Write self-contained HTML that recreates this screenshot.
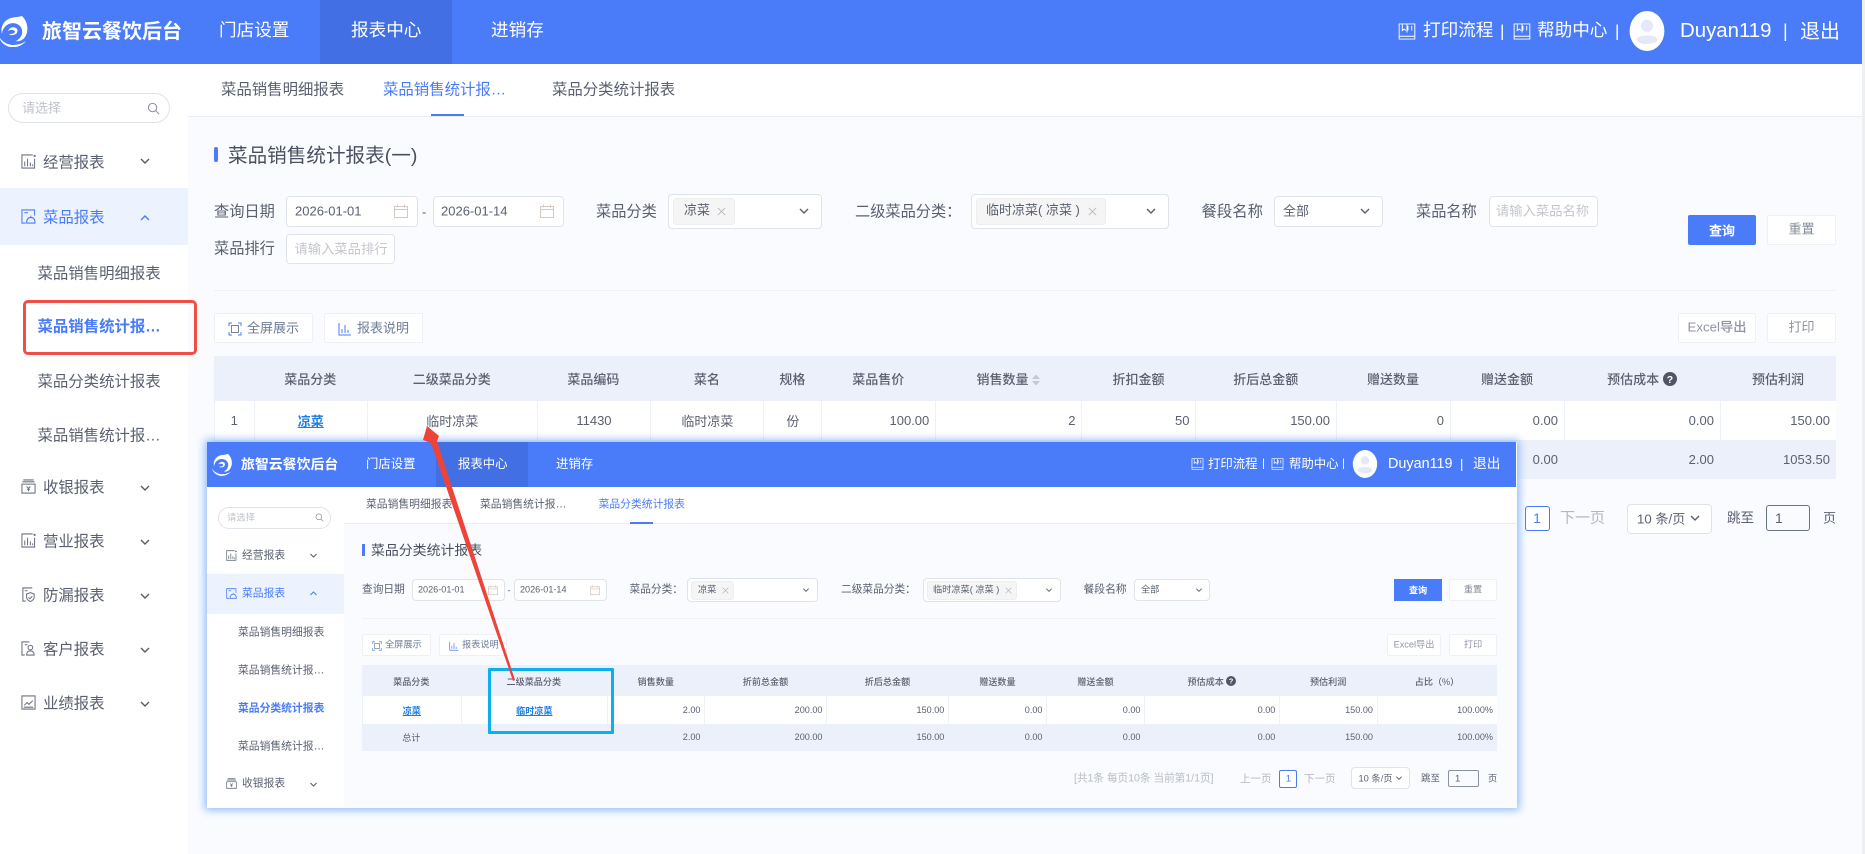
<!DOCTYPE html>
<html lang="zh"><head><meta charset="utf-8"><title>菜品销售统计报表</title>
<style>
html,body{margin:0;padding:0;background:#f9fbff}
body{width:1865px;height:854px;position:relative;overflow:hidden;font-family:"Liberation Sans","Noto Sans CJK SC",sans-serif;color:#5a6070}
.b{position:absolute;box-sizing:border-box}
.t,.c,.r{position:absolute;line-height:1;white-space:nowrap}
.t{transform:translateY(-50%)}
.c{transform:translate(-50%,-50%)}
.r{transform:translate(-100%,-50%)}
svg.i{position:absolute;overflow:visible;fill:none;stroke:none}
.w{color:#fff}.bl{color:#4a7cf9}
.inp{background:#fff;border:1px solid #dfe3ea;border-radius:4px}
.btn{background:#fff;border:1px solid #eef0f5;border-radius:2px}
.tag{background:#f5f5f5;border:1px solid #eeeeee;border-radius:3px}
table{position:absolute;border-collapse:separate;border-spacing:0;table-layout:fixed;color:#5a6070}
td,th{padding:0;overflow:hidden;white-space:nowrap;box-sizing:border-box}
th{background:#ecf0fa;font-weight:500;text-align:center}
tr.d td{background:#fff;border-left:1px solid #eef1f8;text-align:right}
tr.s td{background:#ecf0fa;text-align:right}
td.m{text-align:center!important}
#T1{left:214px;top:356px;width:1622px;font-size:13px}
#T1 td{padding-right:6px}#T1 td.m{padding-right:0}
#T1 th{height:45px}#T1 tr.d td{height:39px}#T1 tr.s td{height:39px}
#T2{left:362px;top:665px;width:1135px;font-size:9.1px}
#T2 td{padding-right:4px}#T2 td.m{padding-right:0}
#T2 th{height:31px}#T2 tr.d td{height:27.5px}#T2 tr.s td{height:27.5px}
a{color:#1e7ee6;font-weight:700;text-decoration:underline}
</style></head><body>
<svg width="0" height="0" style="position:absolute"><defs>
<symbol id="chev" viewBox="0 0 12 12"><path d="M2 4l4 4 4-4" fill="none" stroke="currentColor" stroke-width="1.4"/></symbol>
<symbol id="up" viewBox="0 0 12 12"><path d="M2 8l4-4 4 4" fill="none" stroke="currentColor" stroke-width="1.4"/></symbol>
<symbol id="cal" viewBox="0 0 14 14"><path d="M.5 2.5h13v11H.5zM.5 5.5h13M3.5 .5v3M10.5 .5v3" fill="none" stroke="#d6c9c0" stroke-width="1"/></symbol>
<symbol id="srch" viewBox="0 0 14 14"><circle cx="6" cy="6" r="4.5" fill="none" stroke="#8a8f9c" stroke-width="1.1"/><path d="M9.5 9.5l3.5 3.5" stroke="#8a8f9c" stroke-width="1.1"/></symbol>
<symbol id="x" viewBox="0 0 10 10"><path d="M1 1l8 8M9 1l-8 8" stroke="#b5b8bf" stroke-width="1"/></symbol>
<symbol id="book" viewBox="0 0 18 18"><path d="M.7 1h16.6v13H.7zM.7 14v3h16.6v-3M9 1v9M4 1v7l2-1.5L8 8M10 3v5M14 3v5" fill="none" stroke="#fff" stroke-width="1"/></symbol>
<symbol id="ava" viewBox="0 0 40 46"><ellipse cx="20" cy="23" rx="20" ry="23" fill="#fff"/><circle cx="20" cy="17" r="7" fill="#e4e8f8"/><ellipse cx="20" cy="33" rx="12" ry="5" fill="#e4e8f8"/></symbol>
<symbol id="logo" viewBox="0 0 30 32"><path d="M23 1c6 6 7 15 3 21-2 3-6 5-9 4 4-2 7-6 6-11-1-6-9-9-15-5C5 12 3 16 3 19 1 12 5 5 12 3c4-1 8-1 11-2zM0 21c2 5 7 8 13 9 5 0 10-1 14-4-4 5-10 7-16 6C6 31 1 27 0 21z" fill="#fff"/><path d="M9 16c1-3 5-5 8-3 2 1 2 4 0 6-2 1-5 2-7 0 2 0 5 0 6-2 0-2-4-3-7-1z" fill="#fff"/></symbol>
<symbol id="chart" viewBox="0 0 16 16"><path d="M12.5 1H1v14h13.5V5M4 13V8M7 13V5M10 13V9M12.5 13v-2" fill="none" stroke="currentColor" stroke-width="1.1"/><circle cx="14.5" cy="2" r="1.2" fill="currentColor"/></symbol>
<symbol id="dish" viewBox="0 0 16 16"><path d="M14.5 7V1H1v14h4M15 15H6c0-4 1.5-6 4.5-6s4.5 2 4.5 6zM3.500 4h4M10.500 7V9" fill="none" stroke="currentColor" stroke-width="1.100"/></symbol>
<symbol id="cash" viewBox="0 0 16 16"><path d="M2.500 1h11M1.500 3h13M1 5.500h14V15H1zM6 8l2 2 2-2M8 10v3M6.500 11h3" fill="none" stroke="currentColor" stroke-width="1.100"/></symbol>
<symbol id="shield" viewBox="0 0 16 16"><path d="M12 1H2v14h3M2 1v14M10 6l4 1.500V11c0 2-2 3.500-4 4.500-2-1-4-2.500-4-4.500V7.500zM8 11l1.500 1.500L12 10M4 4h3" fill="none" stroke="currentColor" stroke-width="1.100"/></symbol>
<symbol id="user" viewBox="0 0 16 16"><path d="M9 1H1v14h3M1 1v14M4 4h3M6 15c0-3 1.500-4.500 4-4.500s4 1.500 4 4.500zM6.500 15h8" fill="none" stroke="currentColor" stroke-width="1.100"/><circle cx="10" cy="7" r="2.500" fill="none" stroke="currentColor" stroke-width="1.100"/></symbol>
<symbol id="trend" viewBox="0 0 16 16"><path d="M1 1h14v14H1zM3.500 11l3-3 2 2 4-4M3 13h10" fill="none" stroke="currentColor" stroke-width="1.100"/></symbol>
<symbol id="full" viewBox="0 0 14 14"><path d="M1 4V1h3M10 1h3v3M13 10v3h-3M4 13H1v-3" fill="none" stroke="#4a7cf9" stroke-width="1"/><rect x="3.500" y="3.500" width="7" height="7" fill="none" stroke="#7d8590" stroke-width="1"/></symbol>
<symbol id="bars" viewBox="0 0 14 14"><path d="M1 1v12h12M4 11V7M7 11V3M10 11V8" fill="none" stroke="#4a7cf9" stroke-width="1"/></symbol>
<symbol id="q" viewBox="0 0 14 14"><circle cx="7" cy="7" r="7" fill="#4f5668"/><text x="7" y="10.800" font-size="10.500" font-weight="700" text-anchor="middle" fill="#fff" font-family="Liberation Sans">?</text></symbol>
<symbol id="sort" viewBox="0 0 8 12"><path d="M4 .5L8 5H0zM4 11.500L0 7h8z" fill="#c3c8d2"/></symbol>
</defs></svg>

<!-- MAIN: header -->
<div class="b" style="left:0;top:0;width:1862px;height:64px;background:#4a7cf9"></div>
<div class="b" style="left:320px;top:0;width:132px;height:64px;background:#4270e4"></div>
<svg class="i" style="left:-1px;top:15px;width:30px;height:32px"><use href="#logo"/></svg>
<span class="t w" style="left:42px;top:32px;font-size:20px;font-weight:700">旅智云餐饮后台</span>
<span class="t w" style="left:219px;top:31px;font-size:17.6px">门店设置</span>
<span class="t w" style="left:351px;top:31px;font-size:17.6px">报表中心</span>
<span class="t w" style="left:491px;top:31px;font-size:17.6px">进销存</span>
<svg class="i" style="left:1398px;top:23px;width:18px;height:17px"><use href="#book"/></svg>
<span class="t w" style="left:1423px;top:31px;font-size:17.6px">打印流程</span>
<span class="t w" style="left:1500px;top:31px;font-size:17px">|</span>
<svg class="i" style="left:1513px;top:23px;width:18px;height:17px"><use href="#book"/></svg>
<span class="t w" style="left:1537px;top:31px;font-size:17.6px">帮助中心</span>
<span class="t w" style="left:1615px;top:31px;font-size:17px">|</span>
<svg class="i" style="left:1627px;top:11px;width:40px;height:40px"><use href="#ava"/></svg>
<span class="t w" style="left:1680px;top:31px;font-size:20.400px">Duyan119</span>
<span class="t w" style="left:1783px;top:31px;font-size:18px">|</span>
<span class="t w" style="left:1800px;top:32px;font-size:20px">退出</span>
<div class="b" style="left:1862px;top:0;width:3px;height:854px;background:#eeeff1"></div>

<!-- MAIN: sidebar -->
<div class="b" style="left:0;top:64px;width:188px;height:790px;background:#fff"></div>
<div class="b" style="left:8px;top:93px;width:162px;height:30px;border:1px solid #dfe3ea;border-radius:15px;background:#fff"></div>
<span class="t" style="left:22px;top:108px;font-size:13px;color:#bfc3ca">请选择</span>
<svg class="i" style="left:147px;top:102px;width:13px;height:13px"><use href="#srch"/></svg>
<div class="b" style="left:0;top:188px;width:188px;height:57px;background:#edf3fe"></div>
<svg class="i" style="left:21px;top:154px;width:15px;height:15px;color:#6b7180"><use href="#chart"/></svg>
<span class="t" style="left:43px;top:162.500px;font-size:15.400px">经营报表</span>
<svg class="i" style="left:139px;top:155px;width:12px;height:12px;color:#555c6b"><use href="#chev"/></svg>
<svg class="i bl" style="left:21px;top:209px;width:15px;height:15px"><use href="#dish"/></svg>
<span class="t bl" style="left:43px;top:217.500px;font-size:15.400px">菜品报表</span>
<svg class="i" style="left:139px;top:212px;width:12px;height:12px;color:#4a7cf9"><use href="#up"/></svg>
<span class="t" style="left:37.500px;top:273.500px;font-size:15.400px">菜品销售明细报表</span>
<span class="t bl" style="left:37.500px;top:327px;font-size:15.400px;font-weight:700">菜品销售统计报…</span>
<span class="t" style="left:37.500px;top:381.500px;font-size:15.400px">菜品分类统计报表</span>
<span class="t" style="left:37.500px;top:436px;font-size:15.400px">菜品销售统计报…</span>
<div class="b" style="left:23px;top:300px;width:174px;height:55px;border:3px solid #ef4f45;border-radius:5px"></div>
<svg class="i" style="left:21px;top:479px;width:15px;height:15px;color:#6b7180"><use href="#cash"/></svg>
<span class="t" style="left:43px;top:488px;font-size:15.400px">收银报表</span>
<svg class="i" style="left:139px;top:482px;width:12px;height:12px;color:#555c6b"><use href="#chev"/></svg>
<svg class="i" style="left:21px;top:533px;width:15px;height:15px;color:#6b7180"><use href="#chart"/></svg>
<span class="t" style="left:43px;top:542px;font-size:15.400px">营业报表</span>
<svg class="i" style="left:139px;top:536px;width:12px;height:12px;color:#555c6b"><use href="#chev"/></svg>
<svg class="i" style="left:21px;top:587px;width:15px;height:15px;color:#6b7180"><use href="#shield"/></svg>
<span class="t" style="left:43px;top:596px;font-size:15.400px">防漏报表</span>
<svg class="i" style="left:139px;top:590px;width:12px;height:12px;color:#555c6b"><use href="#chev"/></svg>
<svg class="i" style="left:21px;top:641px;width:15px;height:15px;color:#6b7180"><use href="#user"/></svg>
<span class="t" style="left:43px;top:650px;font-size:15.400px">客户报表</span>
<svg class="i" style="left:139px;top:644px;width:12px;height:12px;color:#555c6b"><use href="#chev"/></svg>
<svg class="i" style="left:21px;top:695px;width:15px;height:15px;color:#6b7180"><use href="#trend"/></svg>
<span class="t" style="left:43px;top:704px;font-size:15.400px">业绩报表</span>
<svg class="i" style="left:139px;top:698px;width:12px;height:12px;color:#555c6b"><use href="#chev"/></svg>

<!-- MAIN: tabs -->
<div class="b" style="left:188px;top:64px;width:1674px;height:53px;background:#fff;border-bottom:1px solid #e9edf4"></div>
<span class="t" style="left:221px;top:90px;font-size:15.400px">菜品销售明细报表</span>
<span class="t bl" style="left:383px;top:90px;font-size:15.400px">菜品销售统计报…</span>
<span class="t" style="left:552px;top:90px;font-size:15.400px">菜品分类统计报表</span>
<div class="b" style="left:431px;top:114px;width:33px;height:2px;background:#4a7cf9"></div>

<!-- MAIN: title -->
<div class="b" style="left:214px;top:147px;width:4px;height:15px;background:#4a7cf9;border-radius:2px"></div>
<span class="t" style="left:228px;top:156.500px;font-size:19.600px;color:#4a5060">菜品销售统计报表(一)</span>

<!-- MAIN: filters -->
<span class="t" style="left:214px;top:212px;font-size:15.200px">查询日期</span>
<div class="b inp" style="left:286px;top:196px;width:132px;height:31px"></div>
<span class="t" style="left:295px;top:211px;font-size:13px">2026-01-01</span>
<svg class="i" style="left:394px;top:204px;width:14px;height:14px"><use href="#cal"/></svg>
<span class="t" style="left:422px;top:212px;font-size:13px">-</span>
<div class="b inp" style="left:432.500px;top:196px;width:131px;height:31px"></div>
<span class="t" style="left:441px;top:211px;font-size:13px">2026-01-14</span>
<svg class="i" style="left:540px;top:204px;width:14px;height:14px"><use href="#cal"/></svg>
<span class="t" style="left:596px;top:212px;font-size:15.200px">菜品分类</span>
<div class="b inp" style="left:668px;top:194px;width:153.500px;height:35px"></div>
<div class="b tag" style="left:673px;top:198px;width:62px;height:27px"></div>
<span class="t" style="left:684px;top:210px;font-size:13px">凉菜</span>
<svg class="i" style="left:717px;top:207px;width:9px;height:9px"><use href="#x"/></svg>
<svg class="i" style="left:798px;top:205px;width:12px;height:12px;color:#5a6070"><use href="#chev"/></svg>
<span class="t" style="left:855px;top:212px;font-size:15.200px">二级菜品分类：</span>
<div class="b inp" style="left:971px;top:194px;width:197.500px;height:35px"></div>
<div class="b tag" style="left:976px;top:198px;width:129.500px;height:27px"></div>
<span class="t" style="left:986px;top:210px;font-size:13px">临时凉菜( 凉菜 )</span>
<svg class="i" style="left:1088px;top:207px;width:9px;height:9px"><use href="#x"/></svg>
<svg class="i" style="left:1145px;top:205px;width:12px;height:12px;color:#5a6070"><use href="#chev"/></svg>
<span class="t" style="left:1201.500px;top:212px;font-size:15.400px">餐段名称</span>
<div class="b inp" style="left:1273.500px;top:196px;width:109px;height:31px"></div>
<span class="t" style="left:1283px;top:211px;font-size:13px">全部</span>
<svg class="i" style="left:1359px;top:205px;width:12px;height:12px;color:#5a6070"><use href="#chev"/></svg>
<span class="t" style="left:1416px;top:212px;font-size:15.200px">菜品名称</span>
<div class="b inp" style="left:1488.500px;top:196px;width:109px;height:31px"></div>
<span class="t" style="left:1496px;top:211px;font-size:13.300px;color:#c3c6cc">请输入菜品名称</span>
<span class="t" style="left:214px;top:249px;font-size:15.200px">菜品排行</span>
<div class="b inp" style="left:286px;top:234px;width:109px;height:30px"></div>
<span class="t" style="left:294.500px;top:249px;font-size:13.300px;color:#c3c6cc">请输入菜品排行</span>
<div class="b" style="left:1688px;top:215px;width:68px;height:30px;background:#4a7cf9;border-radius:2px"></div>
<span class="c w" style="left:1722px;top:231px;font-size:13px;font-weight:700">查询</span>
<div class="b btn" style="left:1767px;top:215px;width:69px;height:30px"></div>
<span class="c" style="left:1801.500px;top:229px;font-size:13px;color:#868c99">重置</span>
<div class="b" style="left:214px;top:290px;width:1622px;height:1px;background:#eff2f7"></div>
<div class="b btn" style="left:214px;top:313px;width:99px;height:30px"></div>
<svg class="i" style="left:228px;top:322px;width:14px;height:14px"><use href="#full"/></svg>
<span class="t" style="left:247px;top:328px;font-size:13px;color:#6e7c96">全屏展示</span>
<div class="b btn" style="left:324px;top:313px;width:99px;height:30px"></div>
<svg class="i" style="left:338px;top:322px;width:14px;height:14px"><use href="#bars"/></svg>
<span class="t" style="left:357px;top:328px;font-size:13px;color:#6e7c96">报表说明</span>
<div class="b btn" style="left:1678px;top:313px;width:78px;height:30px"></div>
<span class="c" style="left:1717px;top:327px;font-size:13.300px;color:#8f95a3;font-weight:500">Excel导出</span>
<div class="b btn" style="left:1767px;top:313px;width:69px;height:30px"></div>
<span class="c" style="left:1801.500px;top:327px;font-size:13px;color:#8f95a3">打印</span>

<!-- MAIN: table -->
<table id="T1"><colgroup><col style="width:39.500px"><col style="width:113.500px"><col style="width:169.600px"><col style="width:113.700px"><col style="width:113.200px"><col style="width:57.800px"><col style="width:114px"><col style="width:146.200px"><col style="width:114px"><col style="width:140.500px"><col style="width:114px"><col style="width:114px"><col style="width:156px"><col style="width:116px"></colgroup>
<tr><th></th><th>菜品分类</th><th>二级菜品分类</th><th>菜品编码</th><th>菜名</th><th>规格</th><th>菜品售价</th><th>销售数量 <svg width="8" height="12" style="vertical-align:-2px"><use href="#sort"/></svg></th><th>折扣金额</th><th>折后总金额</th><th>赠送数量</th><th>赠送金额</th><th>预估成本 <svg width="14" height="14" style="vertical-align:-2px"><use href="#q"/></svg></th><th>预估利润</th></tr>
<tr class="d"><td class="m">1</td><td class="m"><a>凉菜</a></td><td class="m">临时凉菜</td><td class="m">11430</td><td class="m">临时凉菜</td><td class="m">份</td><td>100.00</td><td>2</td><td>50</td><td>150.00</td><td>0</td><td>0.00</td><td>0.00</td><td>150.00</td></tr>
<tr class="s"><td></td><td class="m">总计</td><td></td><td></td><td></td><td></td><td></td><td></td><td></td><td></td><td></td><td>0.00</td><td>2.00</td><td>1053.50</td></tr>
</table>

<!-- MAIN: pagination -->
<div class="b" style="left:1524.500px;top:506px;width:25px;height:25px;border:1px solid #4a7cf9;border-radius:3px;background:#fff"></div>
<span class="c bl" style="left:1537px;top:518px;font-size:14px">1</span>
<span class="t" style="left:1560px;top:518px;font-size:15px;color:#b3b7c0">下一页</span>
<div class="b inp" style="left:1627px;top:504px;width:85px;height:30px"></div>
<span class="t" style="left:1637px;top:519px;font-size:13.200px">10 条/页</span>
<svg class="i" style="left:1689px;top:512px;width:12px;height:12px;color:#5a6070"><use href="#chev"/></svg>
<span class="t" style="left:1727px;top:518px;font-size:13.500px">跳至</span>
<div class="b" style="left:1766px;top:505px;width:44px;height:26px;border:1px solid #6a7285;border-radius:3px"></div>
<span class="t" style="left:1775px;top:518px;font-size:14px">1</span>
<span class="t" style="left:1823px;top:518px;font-size:13px">页</span>

<!-- OVERLAY -->
<div class="b" style="left:207px;top:442px;width:1310px;height:366px;background:#f9fbff;box-shadow:0 0 8px 2px #8db8fb"></div>
<div class="b" style="left:207px;top:442px;width:1309px;height:45px;background:#4a7cf9"></div>
<div class="b" style="left:436px;top:442px;width:92px;height:45px;background:#4270e4"></div>
<svg class="i" style="left:211.500px;top:453px;width:21px;height:23px"><use href="#logo"/></svg>
<span class="t w" style="left:241px;top:464.500px;font-size:13.900px;font-weight:700">旅智云餐饮后台</span>
<span class="t w" style="left:366px;top:463.500px;font-size:12.400px">门店设置</span>
<span class="t w" style="left:458px;top:463.500px;font-size:12.400px">报表中心</span>
<span class="t w" style="left:556px;top:463.500px;font-size:12.400px">进销存</span>
<svg class="i" style="left:1191px;top:458px;width:13px;height:12px"><use href="#book"/></svg>
<span class="t w" style="left:1208px;top:463.500px;font-size:12.400px">打印流程</span>
<span class="t w" style="left:1262px;top:464px;font-size:11px">|</span>
<svg class="i" style="left:1271px;top:458px;width:13px;height:12px"><use href="#book"/></svg>
<span class="t w" style="left:1289px;top:463.500px;font-size:12.400px">帮助中心</span>
<span class="t w" style="left:1342px;top:464px;font-size:11px">|</span>
<svg class="i" style="left:1351px;top:450px;width:28px;height:28px"><use href="#ava"/></svg>
<span class="t w" style="left:1388px;top:463.500px;font-size:14.400px">Duyan119</span>
<span class="t w" style="left:1460px;top:464px;font-size:13px">|</span>
<span class="t w" style="left:1473px;top:464px;font-size:13.700px">退出</span>

<div class="b" style="left:207px;top:487px;width:136.600px;height:321px;background:#fff"></div>
<div class="b" style="left:217.500px;top:507px;width:113px;height:21.500px;border:1px solid #dfe3ea;border-radius:11px"></div>
<span class="t" style="left:227px;top:517.500px;font-size:9.300px;color:#bfc3ca">请选择</span>
<svg class="i" style="left:315px;top:513px;width:9px;height:9px"><use href="#srch"/></svg>
<div class="b" style="left:207px;top:574px;width:136.600px;height:40px;background:#edf3fe"></div>
<svg class="i" style="left:226px;top:550px;width:11px;height:11px;color:#6b7180"><use href="#chart"/></svg>
<span class="t" style="left:242px;top:556px;font-size:10.800px">经营报表</span>
<svg class="i" style="left:309px;top:550.500px;width:9px;height:9px;color:#555c6b"><use href="#chev"/></svg>
<svg class="i bl" style="left:226px;top:588px;width:11px;height:11px"><use href="#dish"/></svg>
<span class="t bl" style="left:242px;top:594px;font-size:10.800px">菜品报表</span>
<svg class="i" style="left:309px;top:589px;width:9px;height:9px;color:#4a7cf9"><use href="#up"/></svg>
<span class="t" style="left:238px;top:633px;font-size:10.800px">菜品销售明细报表</span>
<span class="t" style="left:238px;top:671px;font-size:10.800px">菜品销售统计报…</span>
<span class="t bl" style="left:238px;top:709px;font-size:10.800px;font-weight:700">菜品分类统计报表</span>
<span class="t" style="left:238px;top:747px;font-size:10.800px">菜品销售统计报…</span>
<svg class="i" style="left:226px;top:778px;width:11px;height:11px;color:#6b7180"><use href="#cash"/></svg>
<span class="t" style="left:242px;top:784px;font-size:10.800px">收银报表</span>
<svg class="i" style="left:309px;top:779.500px;width:9px;height:9px;color:#555c6b"><use href="#chev"/></svg>

<div class="b" style="left:343.600px;top:487px;width:1172.400px;height:37px;background:#fff;border-bottom:1px solid #e9edf4"></div>
<span class="t" style="left:366px;top:505px;font-size:10.800px">菜品销售明细报表</span>
<span class="t" style="left:480px;top:505px;font-size:10.800px">菜品销售统计报…</span>
<span class="t bl" style="left:598.600px;top:505px;font-size:10.800px">菜品分类统计报表</span>
<div class="b" style="left:630px;top:522px;width:23px;height:1.500px;background:#4a7cf9"></div>

<div class="b" style="left:362px;top:544px;width:2.500px;height:12px;background:#4a7cf9"></div>
<span class="t" style="left:371px;top:550.500px;font-size:13.900px;color:#4a5060">菜品分类统计报表</span>

<span class="t" style="left:362px;top:590px;font-size:10.700px">查询日期</span>
<div class="b inp" style="left:412px;top:579px;width:92.500px;height:22px"></div>
<span class="t" style="left:418px;top:590px;font-size:9.100px">2026-01-01</span>
<svg class="i" style="left:488px;top:585px;width:10px;height:10px"><use href="#cal"/></svg>
<span class="t" style="left:507.500px;top:590.500px;font-size:9px">-</span>
<div class="b inp" style="left:514px;top:579px;width:92.500px;height:22px"></div>
<span class="t" style="left:520px;top:590px;font-size:9.100px">2026-01-14</span>
<svg class="i" style="left:590px;top:585px;width:10px;height:10px"><use href="#cal"/></svg>
<span class="t" style="left:629.500px;top:590px;font-size:10.700px">菜品分类：</span>
<div class="b inp" style="left:687.400px;top:578px;width:130.300px;height:24px"></div>
<div class="b tag" style="left:691.300px;top:581px;width:42.300px;height:19px"></div>
<span class="t" style="left:698px;top:589.500px;font-size:9.200px">凉菜</span>
<svg class="i" style="left:721.500px;top:587px;width:7px;height:7px"><use href="#x"/></svg>
<svg class="i" style="left:801.500px;top:586px;width:8px;height:8px;color:#5a6070"><use href="#chev"/></svg>
<span class="t" style="left:841px;top:590px;font-size:10.700px">二级菜品分类：</span>
<div class="b inp" style="left:922.500px;top:578px;width:138px;height:24px"></div>
<div class="b tag" style="left:926.500px;top:581px;width:90px;height:19px"></div>
<span class="t" style="left:933px;top:589.500px;font-size:9.200px">临时凉菜( 凉菜 )</span>
<svg class="i" style="left:1004.500px;top:587px;width:7px;height:7px"><use href="#x"/></svg>
<svg class="i" style="left:1044.500px;top:586px;width:8px;height:8px;color:#5a6070"><use href="#chev"/></svg>
<span class="t" style="left:1083.500px;top:590px;font-size:10.800px">餐段名称</span>
<div class="b inp" style="left:1134px;top:579px;width:76px;height:22px"></div>
<span class="t" style="left:1141px;top:590px;font-size:9.200px">全部</span>
<svg class="i" style="left:1194.500px;top:586px;width:8px;height:8px;color:#5a6070"><use href="#chev"/></svg>
<div class="b" style="left:1394px;top:579px;width:47.500px;height:22px;background:#4a7cf9"></div>
<span class="c w" style="left:1418px;top:591px;font-size:9.200px;font-weight:700">查询</span>
<div class="b btn" style="left:1449px;top:579px;width:48px;height:22px"></div>
<span class="c" style="left:1473px;top:589.500px;font-size:9.200px;color:#868c99">重置</span>
<div class="b" style="left:362px;top:618px;width:1135px;height:1px;background:#eff2f7"></div>
<div class="b btn" style="left:362px;top:634px;width:69px;height:22px"></div>
<svg class="i" style="left:372px;top:641px;width:10px;height:10px"><use href="#full"/></svg>
<span class="t" style="left:385px;top:645px;font-size:9.200px;color:#6e7c96">全屏展示</span>
<div class="b btn" style="left:439px;top:634px;width:68px;height:22px"></div>
<svg class="i" style="left:449px;top:641px;width:10px;height:10px"><use href="#bars"/></svg>
<span class="t" style="left:462px;top:645px;font-size:9.200px;color:#6e7c96">报表说明</span>
<div class="b btn" style="left:1387px;top:634px;width:54px;height:22px"></div>
<span class="c" style="left:1414px;top:645px;font-size:9.200px;color:#8f95a3">Excel导出</span>
<div class="b btn" style="left:1449px;top:634px;width:48px;height:22px"></div>
<span class="c" style="left:1473px;top:645px;font-size:9.200px;color:#8f95a3">打印</span>

<table id="T2"><colgroup><col style="width:98.600px"><col style="width:146.400px"><col style="width:97.500px"><col style="width:122px"><col style="width:121.900px"><col style="width:98.100px"><col style="width:98px"><col style="width:134.900px"><col style="width:97.600px"><col style="width:120px"></colgroup>
<tr><th>菜品分类</th><th>二级菜品分类</th><th>销售数量</th><th>折前总金额</th><th>折后总金额</th><th>赠送数量</th><th>赠送金额</th><th>预估成本 <svg width="10" height="10" style="vertical-align:-1.500px"><use href="#q"/></svg></th><th>预估利润</th><th>占比（%）</th></tr>
<tr class="d"><td class="m"><a>凉菜</a></td><td class="m"><a>临时凉菜</a></td><td>2.00</td><td>200.00</td><td>150.00</td><td>0.00</td><td>0.00</td><td>0.00</td><td>150.00</td><td>100.00%</td></tr>
<tr class="s"><td class="m">总计</td><td></td><td>2.00</td><td>200.00</td><td>150.00</td><td>0.00</td><td>0.00</td><td>0.00</td><td>150.00</td><td>100.00%</td></tr>
</table>

<span class="t" style="left:1074px;top:779px;font-size:10.600px;color:#b8bcc5">[共1条 每页10条 当前第1/1页]</span>
<span class="t" style="left:1240px;top:779px;font-size:10.500px;color:#b3b7c0">上一页</span>
<div class="b" style="left:1279.400px;top:770px;width:18px;height:18px;border:1px solid #4a7cf9;border-radius:2px;background:#fff"></div>
<span class="c bl" style="left:1288.400px;top:779px;font-size:9.500px">1</span>
<span class="t" style="left:1304px;top:779px;font-size:10.500px;color:#b3b7c0">下一页</span>
<div class="b inp" style="left:1351px;top:767px;width:59px;height:22px"></div>
<span class="t" style="left:1358.500px;top:778.500px;font-size:9.300px">10 条/页</span>
<svg class="i" style="left:1394.500px;top:774px;width:8px;height:8px;color:#5a6070"><use href="#chev"/></svg>
<span class="t" style="left:1421px;top:778.500px;font-size:9.500px">跳至</span>
<div class="b" style="left:1448px;top:770px;width:31px;height:17px;border:1px solid #8a91a0;border-radius:2px"></div>
<span class="t" style="left:1455px;top:778.500px;font-size:9.500px">1</span>
<span class="t" style="left:1488px;top:778.500px;font-size:9.200px">页</span>

<!-- Annotations -->
<div class="b" style="left:488px;top:668px;width:126px;height:66px;border:3px solid #0cb0ef;border-radius:1px"></div>
<svg class="i" style="left:0;top:0;width:1865px;height:854px;pointer-events:none"><polygon points="427,426 439,436 437,441 515,680 513,681 431,443 423,440" fill="#ee4338"/></svg>
</body></html>
